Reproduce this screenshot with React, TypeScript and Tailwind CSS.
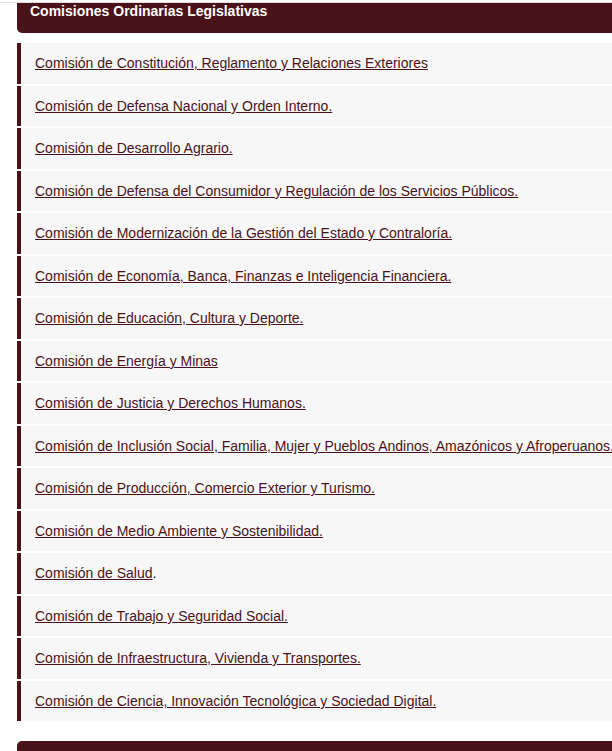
type Commission = {
  name: string;
  suffix?: string;
};

const commissions: Commission[] = [
  { name: "Comisión de Constitución, Reglamento y Relaciones Exteriores" },
  { name: "Comisión de Defensa Nacional y Orden Interno." },
  { name: "Comisión de Desarrollo Agrario." },
  { name: "Comisión de Defensa del Consumidor y Regulación de los Servicios Públicos." },
  { name: "Comisión de Modernización de la Gestión del Estado y Contraloría." },
  { name: "Comisión de Economía, Banca, Finanzas e Inteligencia Financiera." },
  { name: "Comisión de Educación, Cultura y Deporte." },
  { name: "Comisión de Energía y Minas" },
  { name: "Comisión de Justicia y Derechos Humanos." },
  { name: "Comisión de Inclusión Social, Familia, Mujer y Pueblos Andinos, Amazónicos y Afroperuanos." },
  { name: "Comisión de Producción, Comercio Exterior y Turismo." },
  { name: "Comisión de Medio Ambiente y Sostenibilidad." },
  { name: "Comisión de Salud", suffix: "." },
  { name: "Comisión de Trabajo y Seguridad Social." },
  { name: "Comisión de Infraestructura, Vivienda y Transportes." },
  { name: "Comisión de Ciencia, Innovación Tecnológica y Sociedad Digital." },
];

export default function App() {
  return (
    <main className="flex min-h-screen flex-col overflow-x-hidden bg-white font-['Liberation_Sans',Arial,sans-serif] text-sm text-[#4a1319]">
      <div className="mt-[2px] h-px shrink-0 bg-[#dddddd]" />

      <section className="shrink-0 pl-[17px]">
        <h2 className="rounded-bl-[5px] bg-[#4a1319] pb-[14px] pl-[13px] text-sm/4 font-bold text-white">
          Comisiones Ordinarias Legislativas
        </h2>

        <ul className="mt-[10px] flex flex-col gap-[2px]">
          {commissions.map(({ name, suffix }) => (
            <li
              key={name}
              className="h-[41px] border-l-4 border-[#4a1319] bg-[#f7f7f7] pl-[14px] leading-10 whitespace-nowrap even:h-10"
            >
              <a href="#" className="underline">
                {name}
              </a>
              {suffix && <span className="text-[#222222]">{suffix}</span>}
            </li>
          ))}
        </ul>
      </section>

      {/* Top edge of the next section */}
      <div className="mt-5 ml-[17px] flex-1 rounded-tl-[5px] bg-[#4a1319]" />
    </main>
  );
}
